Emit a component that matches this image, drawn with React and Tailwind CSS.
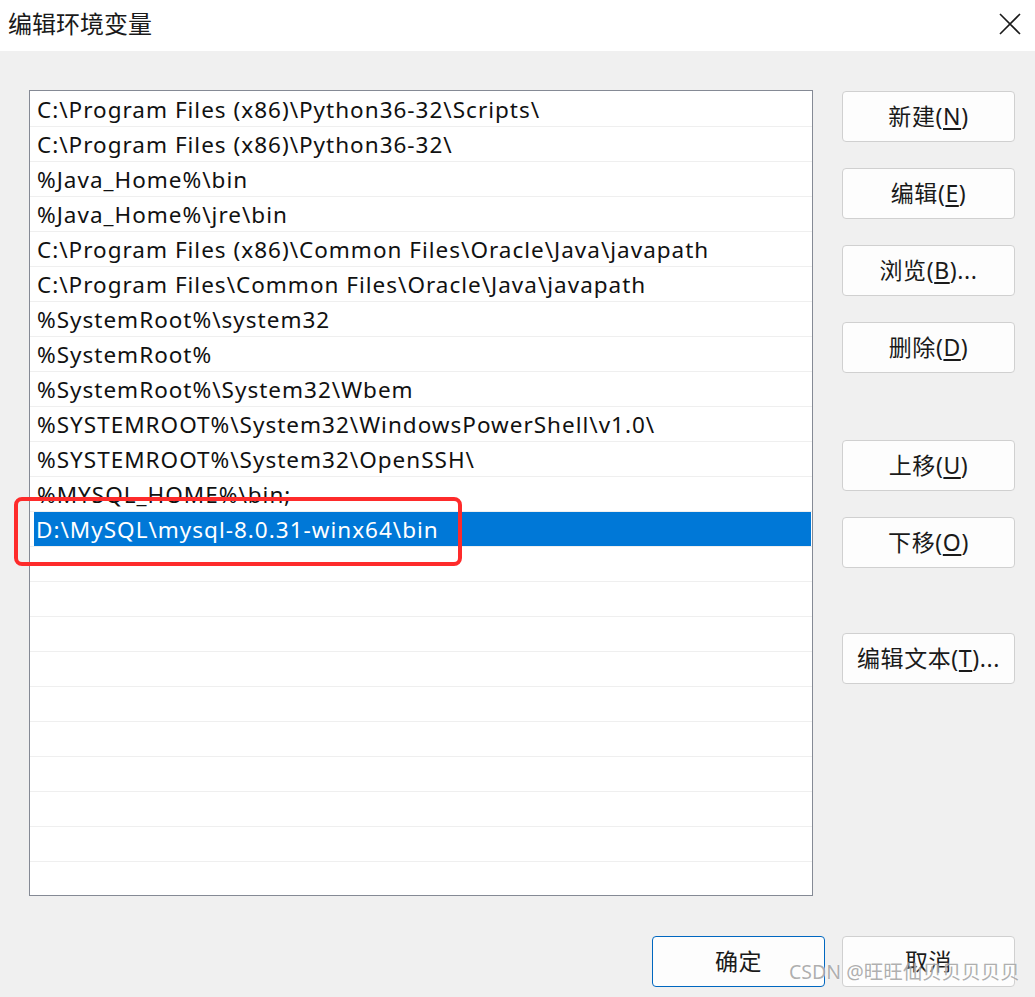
const PATHS = [
  'C:\\Program Files (x86)\\Python36-32\\Scripts\\',
  'C:\\Program Files (x86)\\Python36-32\\',
  '%Java_Home%\\bin',
  '%Java_Home%\\jre\\bin',
  'C:\\Program Files (x86)\\Common Files\\Oracle\\Java\\javapath',
  'C:\\Program Files\\Common Files\\Oracle\\Java\\javapath',
  '%SystemRoot%\\system32',
  '%SystemRoot%',
  '%SystemRoot%\\System32\\Wbem',
  '%SYSTEMROOT%\\System32\\WindowsPowerShell\\v1.0\\',
  '%SYSTEMROOT%\\System32\\OpenSSH\\',
  '%MYSQL_HOME%\\bin;',
  'D:\\MySQL\\mysql-8.0.31-winx64\\bin',
];

const SELECTED = 12;
const TOTAL_ROWS = 23;

function DlgButton({ label, hotkey, suffix = '', primary = false, className = '' }) {
  return (
    <button
      className={`h-[51px] w-[173px] rounded-[4px] border bg-[#fdfdfd] text-[23px] tracking-[0.6px] text-[#1a1a1a] flex items-center justify-center ${
        primary ? 'border-[#0067c0]' : 'border-[#d0d0d0]'
      } ${className}`}
    >
      {label}
      {hotkey && (
        <>
          (<span className="underline underline-offset-[3px]">{hotkey}</span>){suffix}
        </>
      )}
    </button>
  );
}

export default function App() {
  const rows = Array.from({ length: TOTAL_ROWS }, (_, i) => PATHS[i] ?? '');

  return (
    <div
      className="relative w-[1035px] h-[997px] bg-[#f0f0f0] overflow-hidden"
      style={{ fontFamily: '"Noto Sans", "Noto Sans CJK SC", sans-serif' }}
    >
      {/* Title bar */}
      <header className="h-[51px] bg-white flex items-center justify-between pl-[8px] pr-[13px]">
        <h1 className="text-[24px] text-[#1a1a1a] leading-none -mt-[4px]">编辑环境变量</h1>
        <svg width="24" height="24" viewBox="0 0 24 24" className="-mt-[4px]">
          <path d="M2 2 L22 22 M22 2 L2 22" stroke="#1a1a1a" strokeWidth="1.6" fill="none" />
        </svg>
      </header>

      <div className="flex pt-[39px] pl-[29px] pr-[20px] gap-[29px]">
        {/* Path list */}
        <div className="w-[784px] h-[806px] bg-white border border-[#858a95] overflow-hidden pt-[1px]">
          {rows.map((text, i) => (
            <div key={i} className="h-[35px] border-b border-[#efefef] flex">
              {i === SELECTED ? (
                <div className="flex-1 ml-[4px] mr-[1px] bg-[#0078d7] text-white flex items-center pl-[2px] pt-[2px]">
                  <span className="text-[22.5px] tracking-[1px] leading-none whitespace-nowrap">{text}</span>
                </div>
              ) : (
                <div className="flex-1 flex items-center pl-[7px] pt-[3px] text-[#111]">
                  <span className="text-[22.5px] tracking-[1px] leading-none whitespace-nowrap">{text}</span>
                </div>
              )}
            </div>
          ))}
        </div>

        {/* Side buttons */}
        <div className="w-[173px] flex flex-col pt-[1px]">
          <DlgButton label="新建" hotkey="N" />
          <DlgButton label="编辑" hotkey="E" className="mt-[26px]" />
          <DlgButton label="浏览" hotkey="B" suffix="..." className="mt-[26px]" />
          <DlgButton label="删除" hotkey="D" className="mt-[26px]" />
          <DlgButton label="上移" hotkey="U" className="mt-[67px]" />
          <DlgButton label="下移" hotkey="O" className="mt-[26px]" />
          <DlgButton label="编辑文本" hotkey="T" suffix="..." className="mt-[65px]" />
        </div>
      </div>

      {/* Footer buttons */}
      <div className="flex justify-end gap-[17px] pr-[20px] mt-[40px]">
        <DlgButton label="确定" primary className="w-[172px]" />
        <DlgButton label="取消" />
      </div>

      {/* Red annotation box */}
      <div className="absolute left-[14px] top-[497px] w-[448px] h-[69px] border-[4px] border-[#fe2b2b] rounded-[8px] pointer-events-none" />

      {/* Watermark */}
      <div className="absolute left-[789px] top-[962px] text-[19.5px] leading-none text-[#9a9a9a]/80 whitespace-nowrap pointer-events-none [text-shadow:0_0_2px_#ffffff]">
        CSDN @旺旺仙贝贝贝贝贝
      </div>
    </div>
  );
}
